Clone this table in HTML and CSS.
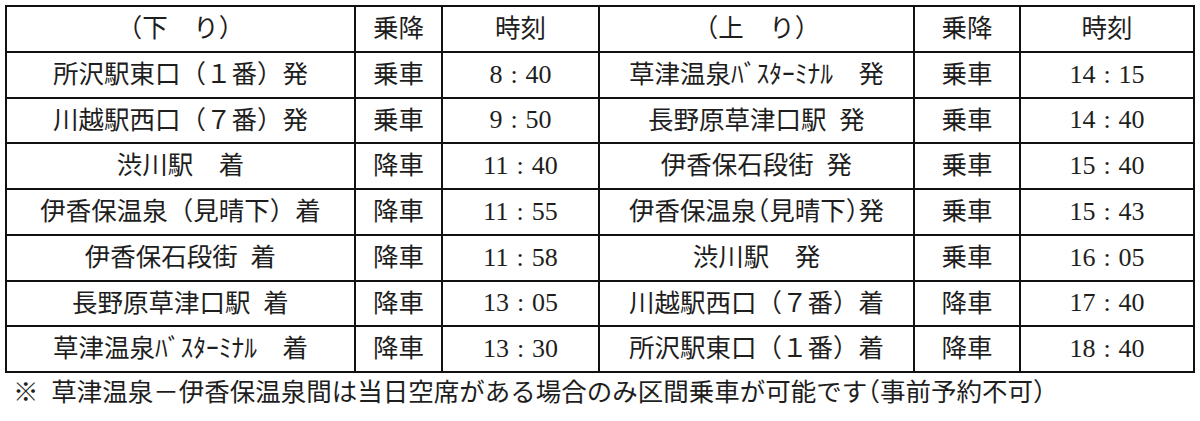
FILE: index.html
```html
<!DOCTYPE html>
<html lang="ja">
<head>
<meta charset="utf-8">
<link rel="stylesheet" href="styles.css">
</head>
<body>
<div class="page">
<table class="timetable">
<colgroup>
<col class="c-stop"><col class="c-act"><col class="c-time">
<col class="c-stop2"><col class="c-act2"><col class="c-time2">
</colgroup>
<tr><td>（下　り）</td><td>乗降</td><td>時刻</td><td>（上　り）</td><td>乗降</td><td>時刻</td></tr>
<tr><td>所沢駅東口（１番）発</td><td>乗車</td><td class="t">8<span class="colon">:</span>40</td><td>草津温泉ﾊﾞｽﾀｰﾐﾅﾙ　発</td><td>乗車</td><td class="t">14<span class="colon">:</span>15</td></tr>
<tr><td>川越駅西口（７番）発</td><td>乗車</td><td class="t">9<span class="colon">:</span>50</td><td>長野原草津口駅&ensp;発</td><td>乗車</td><td class="t">14<span class="colon">:</span>40</td></tr>
<tr><td>渋川駅　着</td><td>降車</td><td class="t">11<span class="colon">:</span>40</td><td>伊香保石段街&ensp;発</td><td>乗車</td><td class="t">15<span class="colon">:</span>40</td></tr>
<tr><td>伊香保温泉（見晴下）着</td><td>降車</td><td class="t">11<span class="colon">:</span>55</td><td class="halt">伊香保温泉（見晴下）発</td><td>乗車</td><td class="t">15<span class="colon">:</span>43</td></tr>
<tr><td>伊香保石段街&ensp;着</td><td>降車</td><td class="t">11<span class="colon">:</span>58</td><td>渋川駅　発</td><td>乗車</td><td class="t">16<span class="colon">:</span>05</td></tr>
<tr><td>長野原草津口駅&ensp;着</td><td>降車</td><td class="t">13<span class="colon">:</span>05</td><td>川越駅西口（７番）着</td><td>降車</td><td class="t">17<span class="colon">:</span>40</td></tr>
<tr><td>草津温泉ﾊﾞｽﾀｰﾐﾅﾙ　着</td><td>降車</td><td class="t">13<span class="colon">:</span>30</td><td>所沢駅東口（１番）着</td><td>降車</td><td class="t">18<span class="colon">:</span>40</td></tr>
</table>
<p class="note">※&ensp;草津温泉－伊香保温泉間は当日空席がある場合のみ区間乗車が可能です<span class="halt">（</span>事前予約不可<span class="halt">）</span></p>
</div>
</body>
</html>
```
FILE: styles.css
```css
html, body {
  margin: 0;
  padding: 0;
  background: #ffffff;
}
body {
  font-family: "Liberation Serif", "Noto Sans CJK JP", serif;
  color: #1e1e1e;
}
.page {
  padding: 5px 0 0 5px;
}
.timetable {
  border-collapse: collapse;
  table-layout: fixed;
  width: 1188px;
  font-size: 25.5px;
}
.c-stop { width: 349px; }
.c-act { width: 87px; }
.c-time { width: 157px; }
.c-stop2 { width: 315px; }
.c-act2 { width: 106px; }
.c-time2 { width: 174px; }
.timetable td {
  border: 2px solid #111;
  height: 42px;
  padding: 0;
  text-align: center;
  vertical-align: middle;
  white-space: nowrap;
  line-height: 1;
}
.timetable tr {
  height: 45.75px;
}
.t {
  font-size: 26px;
}
.colon {
  padding: 0 8px;
}
.halt {
  font-feature-settings: "halt";
}
.note {
  margin: 5px 0 0 8px;
  font-size: 25.5px;
  line-height: 30px;
  white-space: nowrap;
}
```
